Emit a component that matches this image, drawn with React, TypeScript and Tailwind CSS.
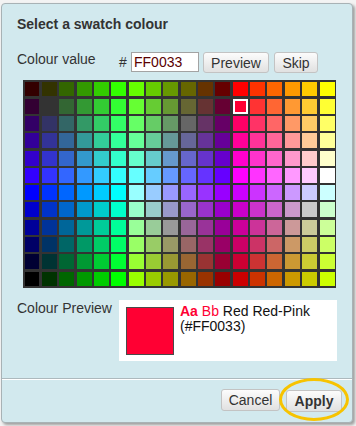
import React from 'react';

const HEX = ['00', '33', '66', '99', 'CC', 'FF'];

// web-safe palette laid out as 12 rows x 18 columns
const buildPalette = () => {
  const rows: string[][] = [];
  for (let r = 0; r < 12; r++) {
    const row: string[] = [];
    for (let c = 0; c < 18; c++) {
      const block = Math.floor(c / 6);
      const i = c % 6;
      const green = block === 1 ? HEX[5 - i] : HEX[i];
      let red: string;
      let blue: string;
      if (r < 6) {
        red = ['33', '66', 'FF'][block];
        blue = HEX[r];
      } else {
        red = ['00', '99', 'CC'][block];
        blue = HEX[11 - r];
      }
      row.push(`#${red}${green}${blue}`);
    }
    rows.push(row);
  }
  return rows;
};

const palette = buildPalette();
const selected = '#FF0033';

const btn =
  'h-[21px] border border-[#c3c3c3] rounded-[3px] bg-linear-to-b from-[#fcfcfc] to-[#e1e1e1] text-[14px] leading-[16px] text-[#333]';

export default function App() {
  return (
    <div className="w-[356px] min-h-[426px] bg-[#f3f3f3] pl-px pt-[3px] font-['Liberation_Sans',Arial,sans-serif]">
      <div className="w-[352px] h-[420px] flex flex-col border border-[#a8b2b5] rounded-[4px] bg-[#d2e9ee] shadow-[2px_2px_3px_rgba(0,0,0,0.35)]">
        {/* Title */}
        <h1 className="ml-[15px] mt-[12px] text-[14px] leading-[16px] font-bold text-[#333]">
          Select a swatch colour
        </h1>

        {/* Colour value row */}
        <div className="ml-[15px] mt-[20px] flex items-start h-[21px]">
          <span className="w-[102px] text-[14px] leading-[16px] text-[#333] -mt-px">Colour value</span>
          <span className="w-[12px] text-[14px] leading-[20px] text-[#333]">#</span>
          <input
            readOnly
            value="FF0033"
            className="w-[68px] h-[20px] border border-[#a3a3a3] bg-white pl-[2px] text-[14px] leading-[18px] text-[#5a0000] outline-none"
          />
          <button className={`${btn} ml-[4px] w-[66px]`}>Preview</button>
          <button className={`${btn} ml-[5px] w-[44px]`}>Skip</button>
        </div>

        {/* Swatch grid */}
        <div className="ml-[21px] mt-[7px] w-[313px] h-[208px] bg-[#333] p-[1.5px] grid grid-cols-[repeat(18,minmax(0,1fr))] grid-rows-[repeat(12,minmax(0,1fr))] gap-[2.4px]">
          {palette.flat().map((c, idx) => (
            <div
              key={idx}
              className={c === selected ? 'border-2 border-white' : ''}
              style={{ backgroundColor: c }}
            />
          ))}
        </div>

        {/* Colour preview */}
        <div className="ml-[15px] mt-[12px] flex items-start">
          <span className="w-[102px] text-[14px] leading-[16px] text-[#333]">Colour Preview</span>
          <div className="w-[218px] h-[61px] bg-white flex items-start pl-[7px]">
            <div className="mt-[7px] w-[48px] h-[48px] shrink-0 border border-[#4a4a4a] bg-[#FF0033]" />
            <p className="ml-[6px] mt-[4px] text-[14px] leading-[15px] text-[#111]">
              <b className="text-[#FF0033]">Aa</b> <span className="text-[#FF0033]">Bb</span> Red Red-Pink
              (#FF0033)
            </p>
          </div>
        </div>

        {/* Divider */}
        <div className="mt-[17px] border-t border-t-[#adb9bd] border-b border-b-white" />

        {/* Footer */}
        <div className="mt-[9px] pr-[10px] flex justify-end">
          <button className={`${btn} h-[22px] w-[59px]`}>Cancel</button>
          <div className="relative ml-[6px]">
            <button className={`${btn} h-[22px] w-[56px] font-bold`}>Apply</button>
            <span className="pointer-events-none absolute left-[-7px] top-[-11px] w-[70px] h-[43px] rounded-[50%] border-[3px] border-[#f7c300]" />
          </div>
        </div>
      </div>
    </div>
  );
}
